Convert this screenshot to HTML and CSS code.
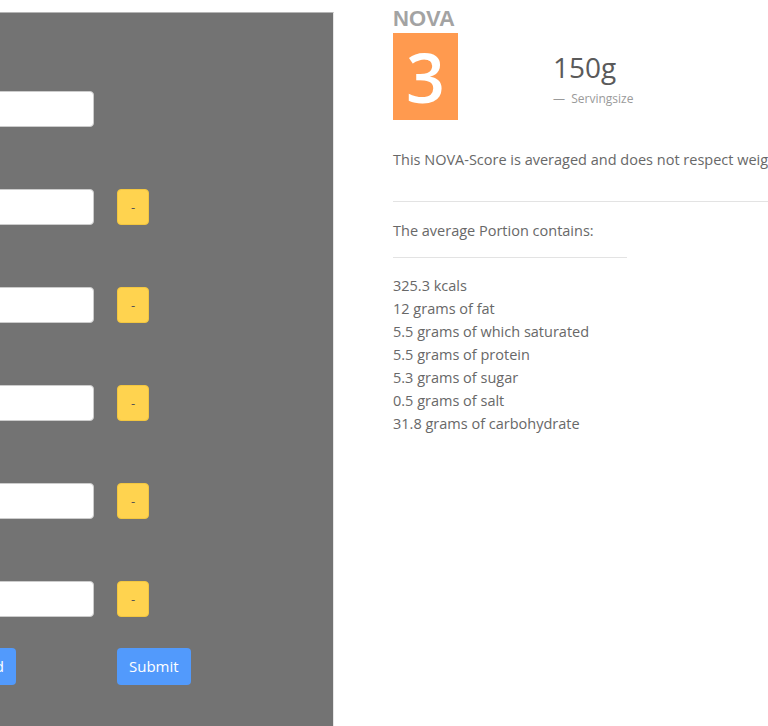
FILE: index.html
```html
<!DOCTYPE html>
<html lang="en">
<head>
<meta charset="UTF-8">
<meta name="viewport" content="width=device-width, initial-scale=1.0">
<title>NOVA Mixer</title>
<link rel="stylesheet" href="styles.css">
</head>
<body>
<div class="page">
    <!-- ingredient form -->
    <form class="mixer">
        <div class="row"><input class="amount" type="text"></div>
        <div class="row"><input class="amount" type="text"><button type="button" class="remove">-</button></div>
        <div class="row"><input class="amount" type="text"><button type="button" class="remove">-</button></div>
        <div class="row"><input class="amount" type="text"><button type="button" class="remove">-</button></div>
        <div class="row"><input class="amount" type="text"><button type="button" class="remove">-</button></div>
        <div class="row"><input class="amount" type="text"><button type="button" class="remove">-</button></div>
        <div class="row actions">
            <button type="button" class="btn add">Add</button>
            <button type="submit" class="btn submit">Submit</button>
        </div>
    </form>

    <!-- result -->
    <section class="result">
        <div class="head">
            <div class="nova">
                <div class="nova-label">NOVA</div>
                <div class="nova-score">3</div>
            </div>
            <div class="serving">
                <div class="serving-size">150g</div>
                <div class="serving-caption">&mdash;&nbsp; Servingsize</div>
            </div>
        </div>
        <p class="note">This NOVA-Score is averaged and does not respect weights of the single products.</p>
        <hr class="line">
        <p class="sub">The average Portion contains:</p>
        <hr class="line short">
        <ul class="facts">
            <li>325.3 kcals</li>
            <li>12 grams of fat</li>
            <li>5.5 grams of which saturated</li>
            <li>5.5 grams of protein</li>
            <li>5.3 grams of sugar</li>
            <li>0.5 grams of salt</li>
            <li>31.8 grams of carbohydrate</li>
        </ul>
    </section>
</div>
</body>
</html>
```

FILE: styles.css
```css
body,div,p,ul,li,form{margin:0;padding:0;}
ul{list-style-type:none;}
html,body{height:100%;}
body{font:400 14.5px/1.5 "Open Sans","Noto Sans",Arial,sans-serif;color:#686868;background:#fff;overflow:hidden;}

.page{display:flex;align-items:stretch;min-height:100%;}

/* left panel */
.mixer{flex:none;box-sizing:border-box;width:434px;margin:12px 0 0 -100px;background:#737373;border-top:1px solid #b5b5b5;border-right:1px solid #e6e6e6;padding:78px 0 0 14px;display:flex;flex-direction:column;gap:62px;}
.mixer .row{display:grid;grid-template-columns:180px auto;column-gap:23px;align-items:center;justify-items:start;}
.mixer .amount{box-sizing:border-box;width:180px;height:36px;border:1px solid #ccc;border-radius:4px;background:#fff;padding:0 10px;font:inherit;}
.mixer .remove{width:32px;height:36px;border:1px solid #f2c640;border-radius:4px;background:#ffd34f;color:#555;font:400 13px/1 "Open Sans",Arial,sans-serif;padding:0;}
.mixer .actions{margin-top:-31px;}
.btn{height:37px;border:0;border-radius:4px;background:#529afc;color:#fff;font:400 15px/37px "Open Sans",Arial,sans-serif;padding:0 12px;}
.btn.add{justify-self:end;margin-right:78px;}

/* right panel */
.result{flex:none;width:520px;margin-left:59px;padding-top:8px;}
.head{display:flex;align-items:center;gap:95px;}
.nova{width:65px;}
.nova-label{font:700 22px/22px "Liberation Sans",Arial,sans-serif;color:#a3a3a3;margin-bottom:3px;}
.nova-score{height:87px;background:#ff9a4f;color:#fff;font:600 68px/87px "Open Sans",sans-serif;text-align:center;}
.serving{margin-top:27px;}
.serving-size{font:400 28px/38px "Open Sans",sans-serif;color:#5a5a5a;}
.serving-caption{font:400 12px/18px "Open Sans",sans-serif;color:#9a9a9a;margin-top:4px;}

.note{margin-top:29px;white-space:nowrap;}
.line{border:0;border-top:1px solid #e3e3e3;margin:30px 0 0;}
.line.short{width:234px;margin-top:15px;}
.sub{margin-top:18px;}
.facts{margin-top:16px;}
.facts li{line-height:23px;}
```
